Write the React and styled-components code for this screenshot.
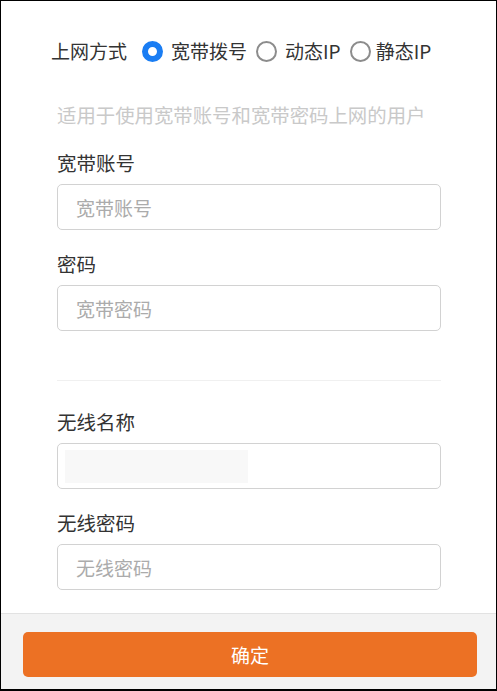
import React, { useState } from 'react'
import styled, { createGlobalStyle } from 'styled-components'

const GlobalStyle = createGlobalStyle`
    html, body {
        margin: 0;
        padding: 0;
        background: #fff;
    }
    * {
        box-sizing: border-box;
    }
`

const Frame = styled.div`
    width: 497px;
    height: 691px;
    border: 1px solid #000;
    border-bottom-width: 2px;
    display: flex;
    flex-direction: column;
    background: #fff;
    font-family: 'Noto Sans CJK SC', sans-serif;
    color: #333;
`

const Main = styled.main`
    flex: 1;
    padding: 38px 55px 0 56px;
`

const ModeRow = styled.div`
    display: flex;
    align-items: center;
    height: 24px;
    margin-left: -6px;
    font-size: 19px;
    line-height: 24px;
    white-space: nowrap;
`

const ModeLabel = styled.span`
    margin-right: 15px;
    flex-shrink: 0;
`

const RadioOption = styled.label`
    display: flex;
    align-items: center;
    flex-shrink: 0;
    gap: ${(p) => p.$gap}px;
    margin-right: 9px;
    cursor: pointer;
`

const RadioDot = styled.span`
    width: 21px;
    height: 21px;
    border-radius: 50%;
    flex-shrink: 0;
    border: ${(p) => (p.$checked ? '6.5px solid #1a7df3' : '2px solid #8c8c8c')};
    background: #fff;
`

const Hint = styled.div`
    margin-top: 40px;
    font-size: 19.4px;
    line-height: 24px;
    color: #c9c9c9;
    white-space: nowrap;
`

const FieldLabel = styled.div`
    margin-top: ${(p) => p.$top}px;
    margin-bottom: 9px;
    font-size: 19.5px;
    line-height: 24px;
    color: #333;
`

const InputBox = styled.div`
    height: 46px;
    border: 1px solid #d2d2d2;
    border-radius: 5px;
    display: flex;
    align-items: center;
    padding: 0 7px 0 18px;
    font-size: 19px;
    color: #ababab;
`

const Redacted = styled.span`
    width: 183px;
    height: 33px;
    margin-left: -11px;
    background: #f8f8f8;
`

const Divider = styled.hr`
    margin: 49px 0 0;
    border: none;
    border-top: 1px solid #f0f0f0;
`

const Footer = styled.footer`
    height: 76px;
    border-top: 1px solid #e2e2e2;
    background: #f3f3f3;
    padding: 18px 19px 0 22px;
`

const SubmitButton = styled.button`
    width: 100%;
    height: 45px;
    border: none;
    border-radius: 5px;
    background: #ec7124;
    color: #fff;
    font-family: inherit;
    font-size: 19px;
    cursor: pointer;
`

const modes = [
    { name: '宽带拨号', gap: 8 },
    { name: '动态IP', gap: 8 },
    { name: '静态IP', gap: 5 },
]

export default function App() {
    const [mode, setMode] = useState(0)

    return (
        <>
            <GlobalStyle />
            <Frame>
                <Main>
                    <ModeRow>
                        <ModeLabel>上网方式</ModeLabel>
                        {modes.map((m, i) => (
                            <RadioOption key={m.name} $gap={m.gap} onClick={() => setMode(i)}>
                                <RadioDot $checked={mode === i} />
                                {m.name}
                            </RadioOption>
                        ))}
                    </ModeRow>
                    <Hint>适用于使用宽带账号和宽带密码上网的用户</Hint>

                    <FieldLabel $top={24}>宽带账号</FieldLabel>
                    <InputBox>宽带账号</InputBox>
                    <FieldLabel $top={22}>密码</FieldLabel>
                    <InputBox>宽带密码</InputBox>

                    <Divider />

                    <FieldLabel $top={29}>无线名称</FieldLabel>
                    <InputBox>
                        <Redacted />
                    </InputBox>
                    <FieldLabel $top={22}>无线密码</FieldLabel>
                    <InputBox>无线密码</InputBox>
                </Main>
                <Footer>
                    <SubmitButton>确定</SubmitButton>
                </Footer>
            </Frame>
        </>
    )
}
